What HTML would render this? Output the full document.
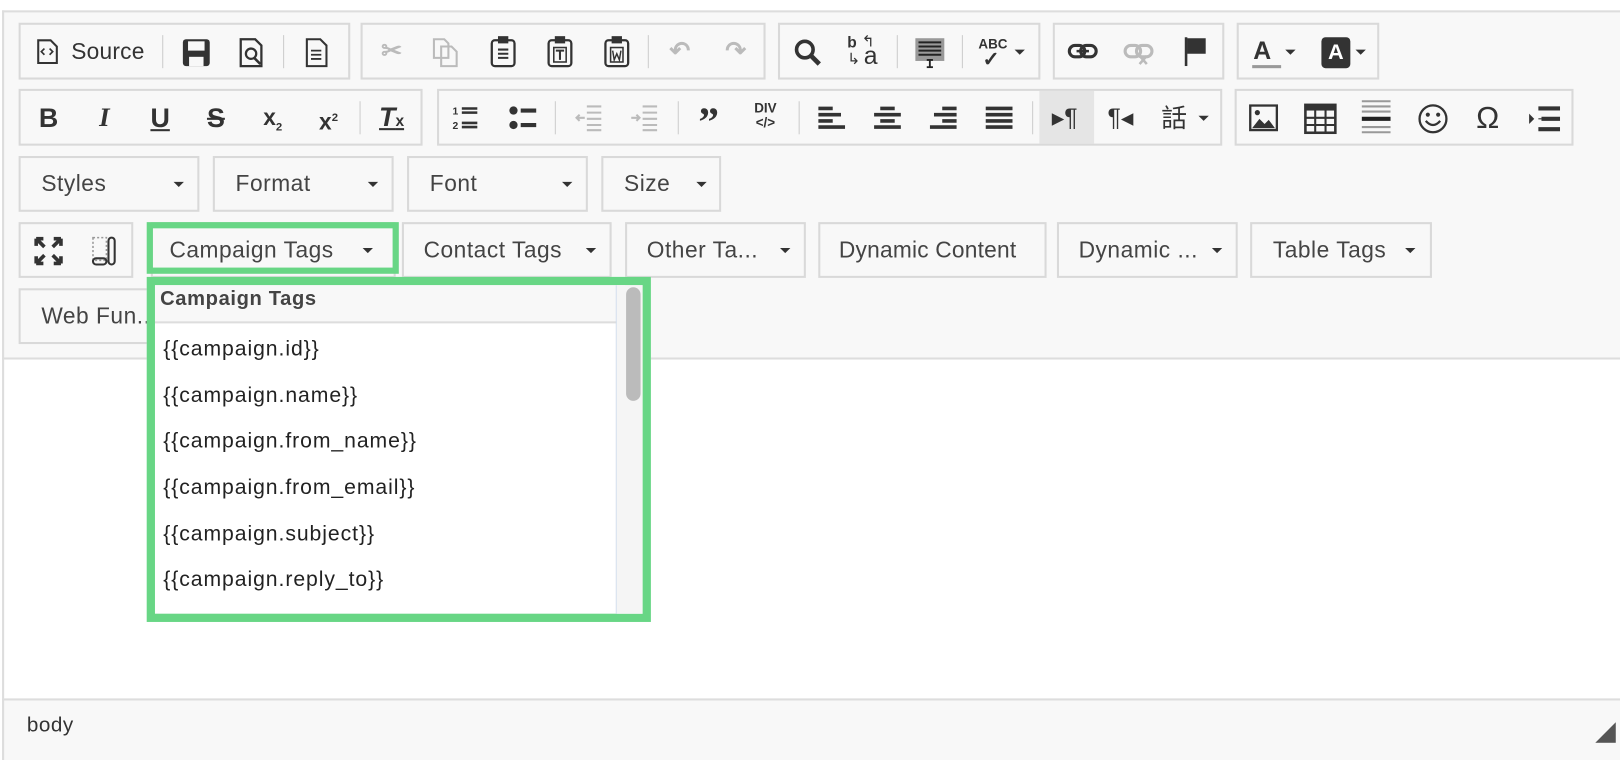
<!DOCTYPE html>
<html><head><meta charset="utf-8"><style>
html,body{margin:0;padding:0;background:#fff;width:1620px;height:754px;overflow:hidden}
#w{position:absolute;left:0;top:0;width:1568px;height:730px;transform:scale(1.03316);transform-origin:0 0;font-family:"Liberation Sans",sans-serif;color:#333}
.a{position:absolute}
.g{position:absolute;border:2px solid #d9d9d9;background:#f8f8f8;box-sizing:border-box}
.i{position:absolute;font-size:24px;line-height:24px;text-align:center;width:30px;color:#333;font-weight:bold}
.sep{position:absolute;width:1px;background:#ccc;height:32px}
.t{position:absolute;font-size:22px;color:#444;letter-spacing:0.5px}
.ar{position:absolute;width:0;height:0;border-left:5px solid transparent;border-right:5px solid transparent;border-top:5px solid #333}
.it{position:absolute;left:158px;font-family:"Liberation Sans",sans-serif;font-size:20.5px;letter-spacing:0.9px;color:#222}
.dis{color:#bbb}
</style></head><body><div id="w">
<!-- frame -->
<div class="a" style="left:2px;top:10px;width:1570px;height:338px;background:#f8f8f8;border-top:2px solid #ddd;border-left:2px solid #ddd;border-bottom:2px solid #ddd;box-sizing:border-box"></div>
<div class="a" style="left:2px;top:348px;width:2px;height:330px;background:#ddd"></div>
<div class="a" style="left:2px;top:676px;width:1570px;height:60px;background:#f8f8f8;border-top:2px solid #ddd;border-left:2px solid #ddd;box-sizing:border-box"></div>
<div class="t" style="left:26px;top:691px;font-size:20px;color:#333">body</div>
<svg class="a" style="left:1544px;top:699px" width="20" height="20"><polygon points="20,0 20,20 0,20" fill="#555"/></svg>

<!-- row1 -->
<div class="g" style="left:18px;top:22px;width:321px;height:55px"></div>
<svg class="a" style="left:35px;top:37px" width="22" height="26"><path d="M2 2h12l6 6v16H2z" fill="none" stroke="#333" stroke-width="2"/><path d="M8 10l-3 3 3 3M13 10l3 3-3 3" stroke="#333" stroke-width="1.6" fill="none"/></svg>
<div class="t" style="left:69px;top:37px;color:#333;letter-spacing:0.2px">Source</div>
<div class="sep" style="left:157px;top:34px"></div>
<svg class="a" style="left:176px;top:37px" width="28" height="28"><rect x="1" y="1" width="26" height="26" rx="3" fill="#333"/><rect x="6" y="3" width="16" height="9" fill="#f8f8f8"/><rect x="7" y="18" width="14" height="9" fill="#f8f8f8"/></svg>
<svg class="a" style="left:231px;top:36px" width="26" height="30"><path d="M2 2h14l6 6v20H2z" fill="none" stroke="#333" stroke-width="2.2"/><circle cx="12" cy="16" r="5" fill="none" stroke="#333" stroke-width="2.2"/><path d="M15 20l6 6" stroke="#333" stroke-width="2.5"/></svg>
<div class="sep" style="left:274px;top:34px"></div>
<svg class="a" style="left:295px;top:36px" width="24" height="30"><path d="M2 2h13l6 6v20H2z" fill="none" stroke="#333" stroke-width="2"/><path d="M6 13h10M6 17h10M6 21h10" stroke="#333" stroke-width="1.8"/></svg>
<div class="g" style="left:349px;top:22px;width:392px;height:55px"></div>
<div class="i dis" style="left:364px;top:38px">✂</div>
<svg class="a" style="left:418px;top:36px" width="26" height="30"><path d="M2 2h10l4 4v14H2zM9 9h10l5 5v14H9z" fill="#f8f8f8" stroke="#bbb" stroke-width="2"/></svg>
<svg class="a" style="left:474px;top:34px" width="26" height="32"><rect x="2" y="5" width="22" height="25" rx="3" fill="none" stroke="#333" stroke-width="2.2"/><rect x="8" y="1" width="10" height="7" fill="#333"/><path d="M8 14h10M8 18h10M8 22h10" stroke="#333" stroke-width="2"/></svg>
<svg class="a" style="left:529px;top:34px" width="26" height="32"><rect x="2" y="5" width="22" height="25" rx="3" fill="none" stroke="#333" stroke-width="2.2"/><rect x="8" y="1" width="10" height="7" fill="#333"/><rect x="7" y="12" width="12" height="14" fill="none" stroke="#333" stroke-width="1.5"/><path d="M9 15h8M13 15v9" stroke="#333" stroke-width="2"/></svg>
<svg class="a" style="left:584px;top:34px" width="26" height="32"><rect x="2" y="5" width="22" height="25" rx="3" fill="none" stroke="#333" stroke-width="2.2"/><rect x="8" y="1" width="10" height="7" fill="#333"/><rect x="7" y="12" width="12" height="14" fill="none" stroke="#333" stroke-width="1.5"/><path d="M9 15l1.5 9 2.5-6 2.5 6 1.5-9" stroke="#333" stroke-width="1.4" fill="none"/></svg>
<div class="sep" style="left:627px;top:34px"></div>
<div class="i dis" style="left:643px;top:38px">↶</div>
<div class="i dis" style="left:697px;top:38px">↷</div>
<div class="g" style="left:753px;top:22px;width:254px;height:55px"></div>
<svg class="a" style="left:768px;top:37px" width="30" height="28"><circle cx="11" cy="11" r="8" fill="none" stroke="#333" stroke-width="3.5"/><path d="M17 17l8 8" stroke="#333" stroke-width="4.5"/></svg>
<div class="a" style="left:820px;top:33px;font-size:15px;font-weight:bold;color:#333">b</div>
<div class="a" style="left:834px;top:31px;font-size:15px;color:#333">↰</div>
<div class="a" style="left:820px;top:48px;font-size:15px;color:#333">↳</div>
<div class="a" style="left:836px;top:41px;font-size:24px;color:#333">a</div>
<div class="sep" style="left:868px;top:34px"></div>
<svg class="a" style="left:885px;top:36px" width="30" height="30"><rect x="1" y="1" width="28" height="22" fill="#999"/><path d="M4 5h22M4 9h22M4 13h22M4 17h22" stroke="#222" stroke-width="2"/><path d="M12 22h6M15 22v7M12 29h6" stroke="#222" stroke-width="1.8"/></svg>
<div class="sep" style="left:931px;top:34px"></div>
<div class="a" style="left:947px;top:35px;font-size:13px;font-weight:bold;color:#333">ABC</div>
<div class="a" style="left:951px;top:45px;font-size:20px;font-weight:bold;color:#333">✓</div>
<div class="ar" style="left:982px;top:48px"></div>
<div class="g" style="left:1019px;top:22px;width:166px;height:55px"></div>
<svg class="a" style="left:1033px;top:42px" width="30" height="16"><rect x="2" y="2" width="15" height="11" rx="5.5" fill="none" stroke="#333" stroke-width="3"/><rect x="13" y="2" width="15" height="11" rx="5.5" fill="none" stroke="#333" stroke-width="3"/><path d="M9 7.5h12" stroke="#333" stroke-width="2.5"/></svg>
<svg class="a" style="left:1087px;top:42px" width="30" height="22"><rect x="2" y="2" width="15" height="11" rx="5.5" fill="none" stroke="#bbb" stroke-width="3"/><rect x="13" y="2" width="15" height="11" rx="5.5" fill="none" stroke="#bbb" stroke-width="3"/><path d="M16 12l7 8M23 12l-7 8" stroke="#bbb" stroke-width="2.5"/></svg>
<svg class="a" style="left:1145px;top:34px" width="26" height="30"><path d="M3 2v28" stroke="#333" stroke-width="2.5"/><path d="M4 3h18v15H4z" fill="#333"/></svg>
<div class="g" style="left:1197px;top:22px;width:138px;height:55px"></div>
<div class="a" style="left:1213px;top:36px;font-size:24px;font-weight:bold;color:#333">A</div>
<div class="a" style="left:1212px;top:63px;width:28px;height:3px;background:#999"></div>
<div class="ar" style="left:1244px;top:48px"></div>
<div class="a" style="left:1279px;top:36px;width:28px;height:30px;background:#333;border-radius:4px;color:#fff;font-weight:bold;font-size:21px;text-align:center;line-height:30px">A</div>
<div class="ar" style="left:1312px;top:48px"></div>

<!-- row2 -->
<div class="g" style="left:18px;top:86px;width:391px;height:55px"></div>
<div class="i" style="left:32px;top:102px;font-size:26px">B</div>
<div class="i" style="left:86px;top:102px;font-size:26px;font-style:italic;font-family:'Liberation Serif',serif">I</div>
<div class="i" style="left:140px;top:102px;font-size:26px;text-decoration:underline">U</div>
<div class="i" style="left:194px;top:102px;font-size:26px;text-decoration:line-through">S</div>
<div class="i" style="left:249px;top:102px;font-size:22px">x<sub style="font-size:11px">2</sub></div>
<div class="i" style="left:303px;top:102px;font-size:22px">x<sup style="font-size:11px">2</sup></div>
<div class="sep" style="left:348px;top:98px"></div>
<div class="i" style="left:364px;top:101px;font-size:26px;font-style:italic;text-decoration:underline">T<span style="font-size:15px;font-style:normal;text-decoration:none">x</span></div>
<div class="g" style="left:423px;top:86px;width:760px;height:55px"></div>
<svg class="a" style="left:438px;top:100px" width="26" height="28"><text x="0" y="11" font-size="10" font-weight="bold" fill="#333" font-family="Liberation Sans">1</text><text x="0" y="25" font-size="10" font-weight="bold" fill="#333" font-family="Liberation Sans">2</text><path d="M9 5h15M9 9h15M9 19h15M9 23h15" stroke="#333" stroke-width="2.5"/></svg>
<svg class="a" style="left:492px;top:100px" width="28" height="28"><circle cx="5" cy="7" r="4" fill="#333"/><circle cx="5" cy="21" r="4" fill="#333"/><path d="M12 7h15M12 21h15" stroke="#333" stroke-width="4"/></svg>
<div class="sep" style="left:537px;top:98px"></div>
<svg class="a" style="left:556px;top:100px" width="28" height="28"><path d="M12 3h14M12 9h14M12 15h14M12 21h14M12 26h14M2 14h8M5 11l-3 3 3 3" stroke="#bbb" stroke-width="2" fill="none"/></svg>
<svg class="a" style="left:610px;top:100px" width="28" height="28"><path d="M12 3h14M12 9h14M12 15h14M12 21h14M12 26h14M1 14h8M6 11l3 3-3 3" stroke="#bbb" stroke-width="2" fill="none"/></svg>
<div class="sep" style="left:656px;top:98px"></div>
<div class="i" style="left:671px;top:98px;font-size:40px;line-height:40px;font-family:'Liberation Serif',serif">”</div>
<div class="a" style="left:730px;top:98px;font-size:13px;font-weight:bold;line-height:14px;text-align:center;color:#333">DIV<br>&lt;/&gt;</div>
<div class="sep" style="left:773px;top:98px"></div>
<svg class="a" style="left:792px;top:102px" width="26" height="26"><path d="M0 3h14M0 9h22M0 15h14M0 21h26" stroke="#333" stroke-width="3.5"/></svg>
<svg class="a" style="left:846px;top:102px" width="26" height="26"><path d="M6 3h14M0 9h26M6 15h14M0 21h26" stroke="#333" stroke-width="3.5"/></svg>
<svg class="a" style="left:900px;top:102px" width="26" height="26"><path d="M12 3h14M4 9h22M12 15h14M0 21h26" stroke="#333" stroke-width="3.5"/></svg>
<svg class="a" style="left:954px;top:102px" width="26" height="26"><path d="M0 3h26M0 9h26M0 15h26M0 21h26" stroke="#333" stroke-width="3.5"/></svg>
<div class="sep" style="left:999px;top:98px"></div>
<div class="a" style="left:1006px;top:88px;width:53px;height:51px;background:#e5e5e5"></div>
<div class="a" style="left:1018px;top:100px;font-size:24px;color:#333">▸¶</div>
<div class="a" style="left:1072px;top:100px;font-size:24px;color:#333">¶◂</div>
<div class="a" style="left:1124px;top:98px;font-size:25px;color:#333;font-family:'Noto Sans CJK SC',sans-serif;line-height:30px">話</div>
<div class="ar" style="left:1160px;top:112px"></div>
<div class="g" style="left:1195px;top:86px;width:328px;height:55px"></div>
<svg class="a" style="left:1209px;top:101px" width="28" height="26"><rect x="1" y="1" width="26" height="24" fill="none" stroke="#333" stroke-width="2.5"/><path d="M3 23l7-9 5 5 4-4 6 8z" fill="#333"/><circle cx="8" cy="8" r="2.5" fill="#333"/></svg>
<svg class="a" style="left:1262px;top:100px" width="32" height="30"><rect x="1.5" y="1.5" width="29" height="27" fill="none" stroke="#333" stroke-width="2.5"/><rect x="1" y="1" width="30" height="6" fill="#333"/><path d="M11 7v22M21 7v22M2 14h28M2 21h28" stroke="#333" stroke-width="2"/></svg>
<svg class="a" style="left:1318px;top:96px" width="28" height="36"><path d="M0 2h28M0 7h28M0 12h28M0 27h28M0 32h28" stroke="#999" stroke-width="2"/><path d="M0 19h28" stroke="#222" stroke-width="4"/></svg>
<svg class="a" style="left:1372px;top:100px" width="30" height="30"><circle cx="15" cy="15" r="13" fill="none" stroke="#333" stroke-width="2.2"/><circle cx="10" cy="11" r="2" fill="#333"/><circle cx="20" cy="11" r="2" fill="#333"/><path d="M8 17q7 8 14 0" fill="none" stroke="#333" stroke-width="2.2"/></svg>
<div class="i" style="left:1425px;top:100px;font-size:30px;line-height:30px;font-weight:normal">Ω</div>
<svg class="a" style="left:1480px;top:102px" width="30" height="26"><path d="M0 8l5 5-5 5z" fill="#333"/><path d="M9 3h21M12 13h18M9 23h21" stroke="#333" stroke-width="4"/><path d="M9 13h3" stroke="#333" stroke-width="1"/></svg>

<!-- row3 -->
<div class="g" style="left:18px;top:151px;width:175px;height:54px"></div>
<div class="t" style="left:40px;top:165px">Styles</div><div class="ar" style="left:168px;top:176px"></div>
<div class="g" style="left:206px;top:151px;width:175px;height:54px"></div>
<div class="t" style="left:228px;top:165px">Format</div><div class="ar" style="left:356px;top:176px"></div>
<div class="g" style="left:394px;top:151px;width:175px;height:54px"></div>
<div class="t" style="left:416px;top:165px">Font</div><div class="ar" style="left:544px;top:176px"></div>
<div class="g" style="left:582px;top:151px;width:116px;height:54px"></div>
<div class="t" style="left:604px;top:165px">Size</div><div class="ar" style="left:674px;top:176px"></div>

<!-- row4 -->
<div class="g" style="left:18px;top:215px;width:111px;height:54px"></div>
<svg class="a" style="left:33px;top:229px" width="28" height="28"><path d="M2 2l8 8M2 2v7M2 2h7M26 2l-8 8M26 2v7M26 2h-7M2 26l8-8M2 26v-7M2 26h7M26 26l-8-8M26 26v-7M26 26h-7" stroke="#333" stroke-width="3.5" fill="none"/></svg>
<svg class="a" style="left:88px;top:228px" width="26" height="30"><rect x="2" y="2" width="13" height="22" fill="none" stroke="#999" stroke-width="1.5" stroke-dasharray="2 2"/><rect x="17" y="2" width="6" height="26" rx="3" fill="none" stroke="#333" stroke-width="2"/><rect x="2" y="22" width="13" height="6" rx="3" fill="none" stroke="#333" stroke-width="2"/></svg>
<div class="g" style="left:146px;top:215px;width:237px;height:54px;background:#f8f8f8"></div>
<div class="a" style="left:142px;top:215px;width:244px;height:50px;border:6px solid #68d685;box-sizing:border-box"></div>
<div class="t" style="left:164px;top:229px">Campaign Tags</div><div class="ar" style="left:351px;top:240px"></div>
<div class="g" style="left:389px;top:215px;width:203px;height:54px"></div>
<div class="t" style="left:410px;top:229px">Contact Tags</div><div class="ar" style="left:567px;top:240px"></div>
<div class="g" style="left:605px;top:215px;width:175px;height:54px"></div>
<div class="t" style="left:626px;top:229px">Other Ta...</div><div class="ar" style="left:755px;top:240px"></div>
<div class="g" style="left:792px;top:215px;width:221px;height:54px"></div>
<div class="t" style="left:812px;top:229px;letter-spacing:0.2px">Dynamic Content</div>
<div class="g" style="left:1023px;top:215px;width:175px;height:54px"></div>
<div class="t" style="left:1044px;top:229px">Dynamic ...</div><div class="ar" style="left:1173px;top:240px"></div>
<div class="g" style="left:1210px;top:215px;width:176px;height:54px"></div>
<div class="t" style="left:1232px;top:229px">Table Tags</div><div class="ar" style="left:1360px;top:240px"></div>

<!-- row5 -->
<div class="g" style="left:18px;top:279px;width:160px;height:54px"></div>
<div class="t" style="left:40px;top:293px">Web Fun...</div>

<!-- dropdown -->
<div class="a" style="left:142px;top:268px;width:488px;height:334px;border:8px solid #68d685;box-sizing:border-box;background:#fff;overflow:hidden">
 <div class="a" style="left:0;top:0;width:455px;height:35px;background:#f8f8f8;border-bottom:2px solid #ddd"></div>
 <div class="a" style="left:5px;top:2px;font-size:19.5px;letter-spacing:0.6px;font-weight:bold;color:#444">Campaign Tags</div>
 <div class="a" style="left:446px;top:0;width:1px;height:330px;background:#cfdcec"></div>
 <div class="a" style="left:447px;top:0;width:25px;height:330px;background:#f5f5f5"></div>
 <div class="a" style="left:456px;top:2px;width:14px;height:110px;background:#bbb;border-radius:7px"></div>
</div>
<div class="it" style="top:326px">{{campaign.id}}</div>
<div class="it" style="top:371px">{{campaign.name}}</div>
<div class="it" style="top:415px">{{campaign.from_name}}</div>
<div class="it" style="top:460px">{{campaign.from_email}}</div>
<div class="it" style="top:505px">{{campaign.subject}}</div>
<div class="it" style="top:549px">{{campaign.reply_to}}</div>
</div></body></html>
